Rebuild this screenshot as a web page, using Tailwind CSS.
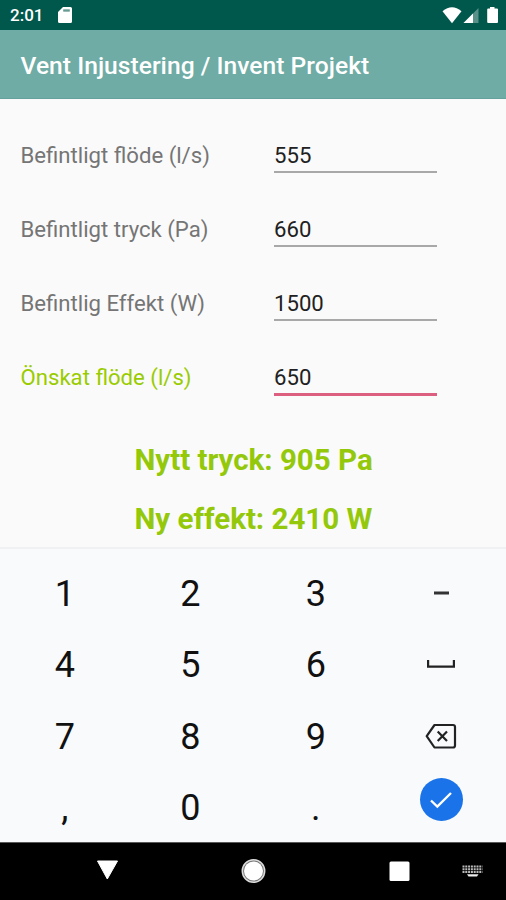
<!DOCTYPE html>
<html lang="sv">
<head>
<meta charset="utf-8">
<title>Vent Injustering</title>
<script src="https://cdn.jsdelivr.net/npm/@tailwindcss/browser@4"></script>
</head>
<body class="flex h-[900px] w-[506px] flex-col overflow-hidden bg-[#fafafa] font-['Roboto',sans-serif]">
  <!-- Status bar -->
  <header class="flex h-[30px] shrink-0 items-center bg-[#00574b] pl-[10px] text-white">
    <span class="w-[48px] text-[17px] leading-[30px] font-medium tracking-[0]">2:01</span>
    <svg class="h-[16px] w-[14px]" viewBox="0 0 14 16"><path fill="#fff" fill-rule="evenodd" d="M5 0H12.500Q14 0 14 1.500V14.500Q14 16 12.500 16H1.500Q0 16 0 14.500V5ZM5.300 2.500V4.500H11.700V2.500Z"/><path fill="#fff" fill-opacity=".4" d="M5.300 2.500H11.700V4.500H5.300Z"/></svg>
    <svg class="ml-auto h-[30px] w-[64px]" viewBox="442 0 64 30">
      <path fill="#fff" d="M442.500 11.200Q452 3.400 461.500 11.200L452 23.200Z"/>
      <path fill="#fff" fill-opacity=".35" d="M478.500 8V23H463.500Z"/>
      <path fill="#fff" d="M473 13.500V23H463.500Z"/>
      <path fill="#fff" d="M490 7H494.500V8.500H497Q498 8.500 498 9.500V22Q498 23 497 23H488.200Q487.200 23 487.200 22V9.500Q487.200 8.500 488.200 8.500H490Z"/>
    </svg>
  </header>
  <!-- App bar -->
  <div class="flex h-[69px] shrink-0 items-center border-b border-[#64a39b] bg-[#6eaca5] pl-[20.500px]">
    <h1 class="pt-[4px] text-[24.600px] leading-[30px] font-medium tracking-[0.030px] whitespace-nowrap text-white">Vent Injustering / Invent Projekt</h1>
  </div>
  <!-- Form -->
  <main class="flex h-[448px] shrink-0 flex-col pt-[37px]">
    <div class="flex h-[74px] shrink-0 items-start pl-[20.500px] text-[22.150px] leading-[38px] whitespace-nowrap">
      <label class="w-[253.500px] text-[#757575]">Befintligt flöde (l/s)</label>
      <div class="h-[37px] w-[163px] border-b-2 border-[#a8a8a8] text-[#212121]">555</div>
    </div>
    <div class="flex h-[74px] shrink-0 items-start pl-[20.500px] text-[22.150px] leading-[38px] whitespace-nowrap">
      <label class="w-[253.500px] text-[#757575]">Befintligt tryck (Pa)</label>
      <div class="h-[37px] w-[163px] border-b-2 border-[#a8a8a8] text-[#212121]">660</div>
    </div>
    <div class="flex h-[74px] shrink-0 items-start pl-[20.500px] text-[22.150px] leading-[38px] whitespace-nowrap">
      <label class="w-[253.500px] text-[#757575]">Befintlig Effekt (W)</label>
      <div class="h-[37px] w-[163px] border-b-2 border-[#a8a8a8] text-[#212121]">1500</div>
    </div>
    <div class="flex h-[73px] shrink-0 items-start pl-[20.500px] text-[22.150px] leading-[38px] whitespace-nowrap">
      <label class="w-[253.500px] text-[#99cc00]">Önskat flöde (l/s)</label>
      <div class="h-[38px] w-[163px] border-b-[3px] border-[#dc5f80] text-[#212121]">650</div>
    </div>
    <div class="flex shrink-0 flex-col pl-[134.500px] text-[29.500px] leading-[59px] font-bold whitespace-nowrap text-[#94c80b]">
      <p>Nytt tryck: 905 Pa</p>
      <p>Ny effekt: 2410 W</p>
    </div>
  </main>
  <!-- Numeric keyboard -->
  <section class="grid h-[295px] shrink-0 grid-cols-4 grid-rows-[71px_72px_71px_71px] border-t-2 border-[#eff1f2] bg-[#f8fafc] px-[2px] pt-[9px] text-center text-[36px] leading-[72px] text-[#111]">
    <div>1</div><div>2</div><div>3</div>
    <div class="flex items-center justify-center pb-[2px]"><svg class="h-[4px] w-[15px]" viewBox="0 0 15 4"><path fill="#333" d="M0 .500h15v3H0z"/></svg></div>
    <div>4</div><div>5</div><div>6</div>
    <div class="flex items-center justify-center pb-[3px]"><svg class="h-[8px] w-[28px]" viewBox="0 0 28 8"><path fill="none" stroke="#222" stroke-width="2.200" d="M1.100 0V6.700H26.900V0"/></svg></div>
    <div>7</div><div>8</div><div>9</div>
    <div class="flex items-center justify-center pb-[2px]"><svg class="h-[26px] w-[32px]" viewBox="0 0 32 26"><path fill="none" stroke="#222" stroke-width="2.200" stroke-linejoin="round" d="M9.500 2H28Q30 2 30 4V22.500Q30 24.500 28 24.500H9.500L1.700 13.200ZM12.700 8.500L22 18M22 8.500L12.700 18"/></svg></div>
    <div>,</div><div>0</div><div>.</div>
    <div class="flex items-start justify-center pt-[6px]"><div class="flex size-[43px] items-center justify-center rounded-full bg-[#1a73e8]"><svg class="h-[18px] w-[22px]" viewBox="0 0 22 18"><path fill="none" stroke="#fff" stroke-width="2.400" d="M1 9.500L7.300 15.500L21 2"/></svg></div></div>
  </section>
  <!-- Navigation bar -->
  <nav class="h-[58px] shrink-0 bg-black">
    <svg class="h-[58px] w-[506px]" viewBox="0 842 506 58">
      <path fill="#777" d="M0 842H506V842.700H0Z"/>
      <path fill="#fff" stroke="#fff" stroke-linejoin="round" d="M97.500 861H117.500L107.300 879Z"/>
      <circle cx="253.500" cy="871" r="11.200" fill="#777" stroke="#ddd" stroke-width="1.500"/>
      <circle cx="253.500" cy="871" r="9.500" fill="#fff"/>
      <rect x="389.500" y="861.500" width="20" height="19.500" rx="1.500" fill="#fff"/>
      <path fill="none" stroke="#bbb" stroke-width="2" stroke-dasharray="2 .8" d="M462.500 866.500H482.500M462.500 869.300H482.500M462.500 872H482.500"/>
      <path fill="#eee" d="M467 874.200H478.500L477 876.500H468.500Z"/>
    </svg>
  </nav>
</body>
</html>
